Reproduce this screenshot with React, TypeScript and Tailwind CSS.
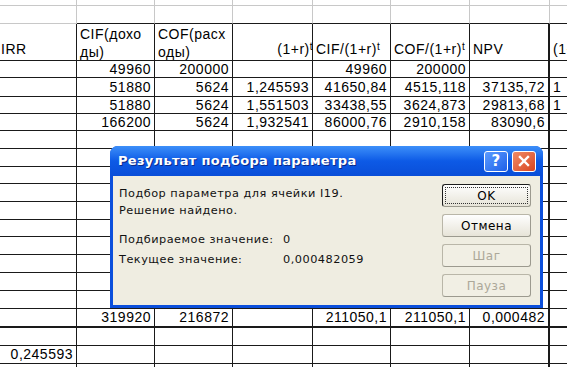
import React from "react";

type CellDef = { t?: React.ReactNode; a?: "l" | "r" };

const W = [
  "w-[77px]",
  "w-[78px]",
  "w-[78px]",
  "w-[80px]",
  "w-[78px]",
  "w-[79px]",
  "w-[80px]",
  "w-[40px]",
];

function Row({
  h,
  cells,
  kind,
  bottom,
}: {
  h: string;
  cells: CellDef[];
  kind: "grey" | "top" | "black";
  bottom?: string;
}) {
  return (
    <div className={`flex ${h}`}>
      {W.map((w, i) => {
        const c = cells[i] || {};
        let b = "border-r border-b border-[#1a1a1a]";
        if (kind === "grey") b = "border-r border-b border-[#c8c8c8]";
        if (kind === "top")
          b =
            i === 0
              ? "border-r border-b border-r-[#c8c8c8] border-b-[#c8c8c8]"
              : "border-r border-b border-r-[#c8c8c8] border-b-[#1a1a1a]";
        const thickR = kind !== "grey" && kind !== "top" && i === 6 ? " border-r-2" : "";
        const thickB = bottom ? ` ${bottom}` : "";
        return (
          <div
            key={i}
            className={`${w} shrink-0 h-full overflow-hidden whitespace-nowrap flex items-center ${b}${thickR}${thickB} ${
              c.a === "l" ? "justify-start pl-[3px]" : "justify-end pr-[3px]"
            }`}
          >
            {c.t}
          </div>
        );
      })}
    </div>
  );
}

const r = (t: React.ReactNode): CellDef => ({ t, a: "r" });
const e: CellDef = {};

function Pow({ base }: { base: string }) {
  return (
    <span className="whitespace-nowrap">
      {base}
      <span className="relative -top-[4px] text-[10px]">t</span>
    </span>
  );
}

function HeaderRow() {
  const hdr = "border-r border-b border-[#1a1a1a]";
  return (
    <div className="flex h-[37px]">
      <div className={`${W[0]} shrink-0 ${hdr} flex items-end pl-[1px] overflow-hidden`}>IRR</div>
      <div className={`${W[1]} shrink-0 ${hdr} pl-[3px] pt-[1px] leading-[18px] overflow-hidden whitespace-nowrap`}>
        <div>CIF(дохо</div>
        <div>ды)</div>
      </div>
      <div className={`${W[2]} shrink-0 ${hdr} pl-[3px] pt-[1px] leading-[18px] overflow-hidden whitespace-nowrap`}>
        <div>COF(расх</div>
        <div>оды)</div>
      </div>
      <div className={`${W[3]} shrink-0 ${hdr} flex items-end justify-end overflow-hidden whitespace-nowrap`}>
        <span className="mr-[-1px]">
          <Pow base="(1+r)" />
        </span>
      </div>
      <div className={`${W[4]} shrink-0 ${hdr} flex items-end pl-[3px] overflow-hidden whitespace-nowrap`}>
        <Pow base="CIF/(1+r)" />
      </div>
      <div className={`${W[5]} shrink-0 ${hdr} flex items-end pl-[3px] overflow-hidden whitespace-nowrap`}>
        <Pow base="COF/(1+r)" />
      </div>
      <div className={`${W[6]} shrink-0 ${hdr} border-r-2 flex items-end pl-[3px] overflow-hidden whitespace-nowrap`}>
        NPV
      </div>
      <div className={`${W[7]} shrink-0 ${hdr} flex items-end pl-[3px] overflow-hidden whitespace-nowrap`}>
        (1+r)
      </div>
    </div>
  );
}

function XpButton({
  children,
  isDefault,
  disabled,
}: {
  children: React.ReactNode;
  isDefault?: boolean;
  disabled?: boolean;
}) {
  return (
    <div
      className={`h-[23px] w-[89px] rounded-[3px] flex items-center justify-center text-[12px] ${
        isDefault ? "border border-[#1c1c1c] p-[2px]" : "border border-[#b9b6a8]"
      } ${disabled ? "text-[#aca899] bg-[#f1efe4]" : "text-black bg-gradient-to-b from-[#fefefe] to-[#e7e4d8]"} border-b-[#9c9a8f] border-r-[#9c9a8f]`}
    >
      {isDefault ? (
        <div className="w-full h-full border border-dotted border-[#333] flex items-center justify-center">
          {children}
        </div>
      ) : (
        children
      )}
    </div>
  );
}

function Dialog() {
  return (
    <div className="absolute left-[110px] top-[146px] w-[433px] h-[162px] rounded-t-[8px] bg-[#0b4fdc] flex flex-col font-['DejaVu_Sans',sans-serif]">
      <div className="h-[30px] shrink-0 rounded-t-[8px] bg-gradient-to-b from-[#3d8ff9] via-[#0d5ae6] to-[#0a4ed8] flex items-center pl-[8px] pr-[7px]">
        <div className="text-white font-bold text-[13px] tracking-[0.3px] flex-1 [text-shadow:1px_1px_0_#0a2a8a]">
          Результат подбора параметра
        </div>
        <div className="flex gap-[4px]">
          <div className="w-[24px] h-[21px] rounded-[3px] border border-white bg-gradient-to-br from-[#5c9cff] to-[#1f5fe8] flex items-center justify-center text-white font-bold text-[15px] leading-none">
            ?
          </div>
          <div className="w-[24px] h-[21px] rounded-[3px] border border-white bg-gradient-to-br from-[#ef8a66] to-[#d9431c] flex items-center justify-center">
            <svg width="12" height="12" viewBox="0 0 12 12">
              <path d="M2 2 L10 10 M10 2 L2 10" stroke="white" strokeWidth="2.4" strokeLinecap="square" />
            </svg>
          </div>
        </div>
      </div>
      <div className="flex-1 mx-[3px] mb-[3px] bg-[#efede1] flex text-[11.3px] text-[#111]">
        <div className="flex-1 pl-[6px] pt-[9px] leading-[17px]">
          <div>Подбор параметра для ячейки I19.</div>
          <div>Решение найдено.</div>
          <div className="flex mt-[12px]">
            <div className="w-[164px]">Подбираемое значение:</div>
            <div>0</div>
          </div>
          <div className="flex mt-[3px]">
            <div className="w-[164px]">Текущее значение:</div>
            <div>0,000482059</div>
          </div>
        </div>
        <div className="flex flex-col gap-[7px] pt-[8px] pr-[9px]">
          <XpButton isDefault>OK</XpButton>
          <XpButton>Отмена</XpButton>
          <XpButton disabled>Шаг</XpButton>
          <XpButton disabled>Пауза</XpButton>
        </div>
      </div>
    </div>
  );
}

export default function App() {
  const emptyRowHeights = [
    "h-[18px]",
    "h-[18px]",
    "h-[17px]",
    "h-[18px]",
    "h-[18px]",
    "h-[17px]",
    "h-[18px]",
    "h-[18px]",
    "h-[18px]",
    "h-[18px]",
  ];
  return (
    <div className="relative w-[567px] h-[367px] overflow-hidden bg-white text-black font-['Liberation_Sans',Arial,sans-serif] text-[14px] tracking-[0.5px]">
      <Row h="h-[6px]" cells={[]} kind="grey" />
      <Row h="h-[18px]" cells={[]} kind="top" />
      <HeaderRow />
      <Row h="h-[17px]" kind="black" cells={[e, r("49960"), r("200000"), e, r("49960"), r("200000"), e, e]} />
      <Row
        h="h-[19px]"
        kind="black"
        cells={[e, r("51880"), r("5624"), r("1,245593"), r("41650,84"), r("4515,118"), r("37135,72"), { t: "1", a: "l" }]}
      />
      <Row
        h="h-[17px]"
        kind="black"
        cells={[e, r("51880"), r("5624"), r("1,551503"), r("33438,55"), r("3624,873"), r("29813,68"), { t: "1", a: "l" }]}
      />
      <Row
        h="h-[17px]"
        kind="black"
        cells={[e, r("166200"), r("5624"), r("1,932541"), r("86000,76"), r("2910,158"), r("83090,6"), e]}
      />
      {emptyRowHeights.map((h, i) => (
        <Row key={i} h={h} kind="black" cells={[]} />
      ))}
      <Row
        h="h-[19px]"
        kind="black"
        bottom="border-b-2"
        cells={[e, r("319920"), r("216872"), e, r("211050,1"), r("211050,1"), r("0,000482"), e]}
      />
      <Row h="h-[18px]" kind="black" cells={[]} />
      <Row h="h-[18px]" kind="black" cells={[r("0,245593")]} />
      <Row h="h-[10px]" kind="black" cells={[]} />
      <Dialog />
    </div>
  );
}
